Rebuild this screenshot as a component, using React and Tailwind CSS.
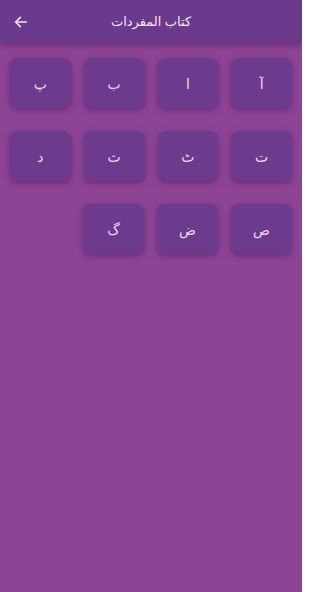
import React from 'react';

const rows = [
  ['آ', 'ا', 'ب', 'پ'],
  ['ت', 'ٹ', 'ث', 'د'],
  ['ص', 'ض', 'گ'],
];

const LetterButton = ({ letter }) => (
  <button className="h-[50px] w-[61px] rounded-lg bg-[#6c3b8d] text-[14px] text-[#f3d6f3] shadow-[0_2px_6px_rgba(60,10,80,0.45)]">
    {letter}
  </button>
);

const App = () => {
  return (
    <div
      className="flex h-[592px] w-[302px] flex-col overflow-hidden bg-[#8e4496]"
      style={{ fontFamily: '"Noto Sans", "DejaVu Sans", sans-serif' }}
    >
      <header className="relative z-10 flex h-[43px] shrink-0 items-center bg-[#6b3a8c] px-[13px] shadow-[0_2px_6px_rgba(50,10,70,0.4)]">
        <svg className="relative z-10" width="16" height="16" viewBox="0 0 24 24" fill="none" stroke="#f4e6f6" strokeWidth="2.4" strokeLinecap="round" strokeLinejoin="round">
          <path d="M20 12H5" />
          <path d="M11 5l-7 7 7 7" />
        </svg>
        <h1 className="absolute inset-x-0 text-center text-[13px] text-[#f4e6f6]" dir="rtl">
          كتاب المفردات
        </h1>
      </header>

      <main className="flex flex-col gap-[23px] px-[10px] pt-[15px]" dir="rtl">
        {rows.map((row, i) => (
          <div key={i} className="flex gap-[13px]">
            {row.map(letter => (
              <LetterButton key={letter} letter={letter} />
            ))}
          </div>
        ))}
      </main>
    </div>
  );
};

export default App;
